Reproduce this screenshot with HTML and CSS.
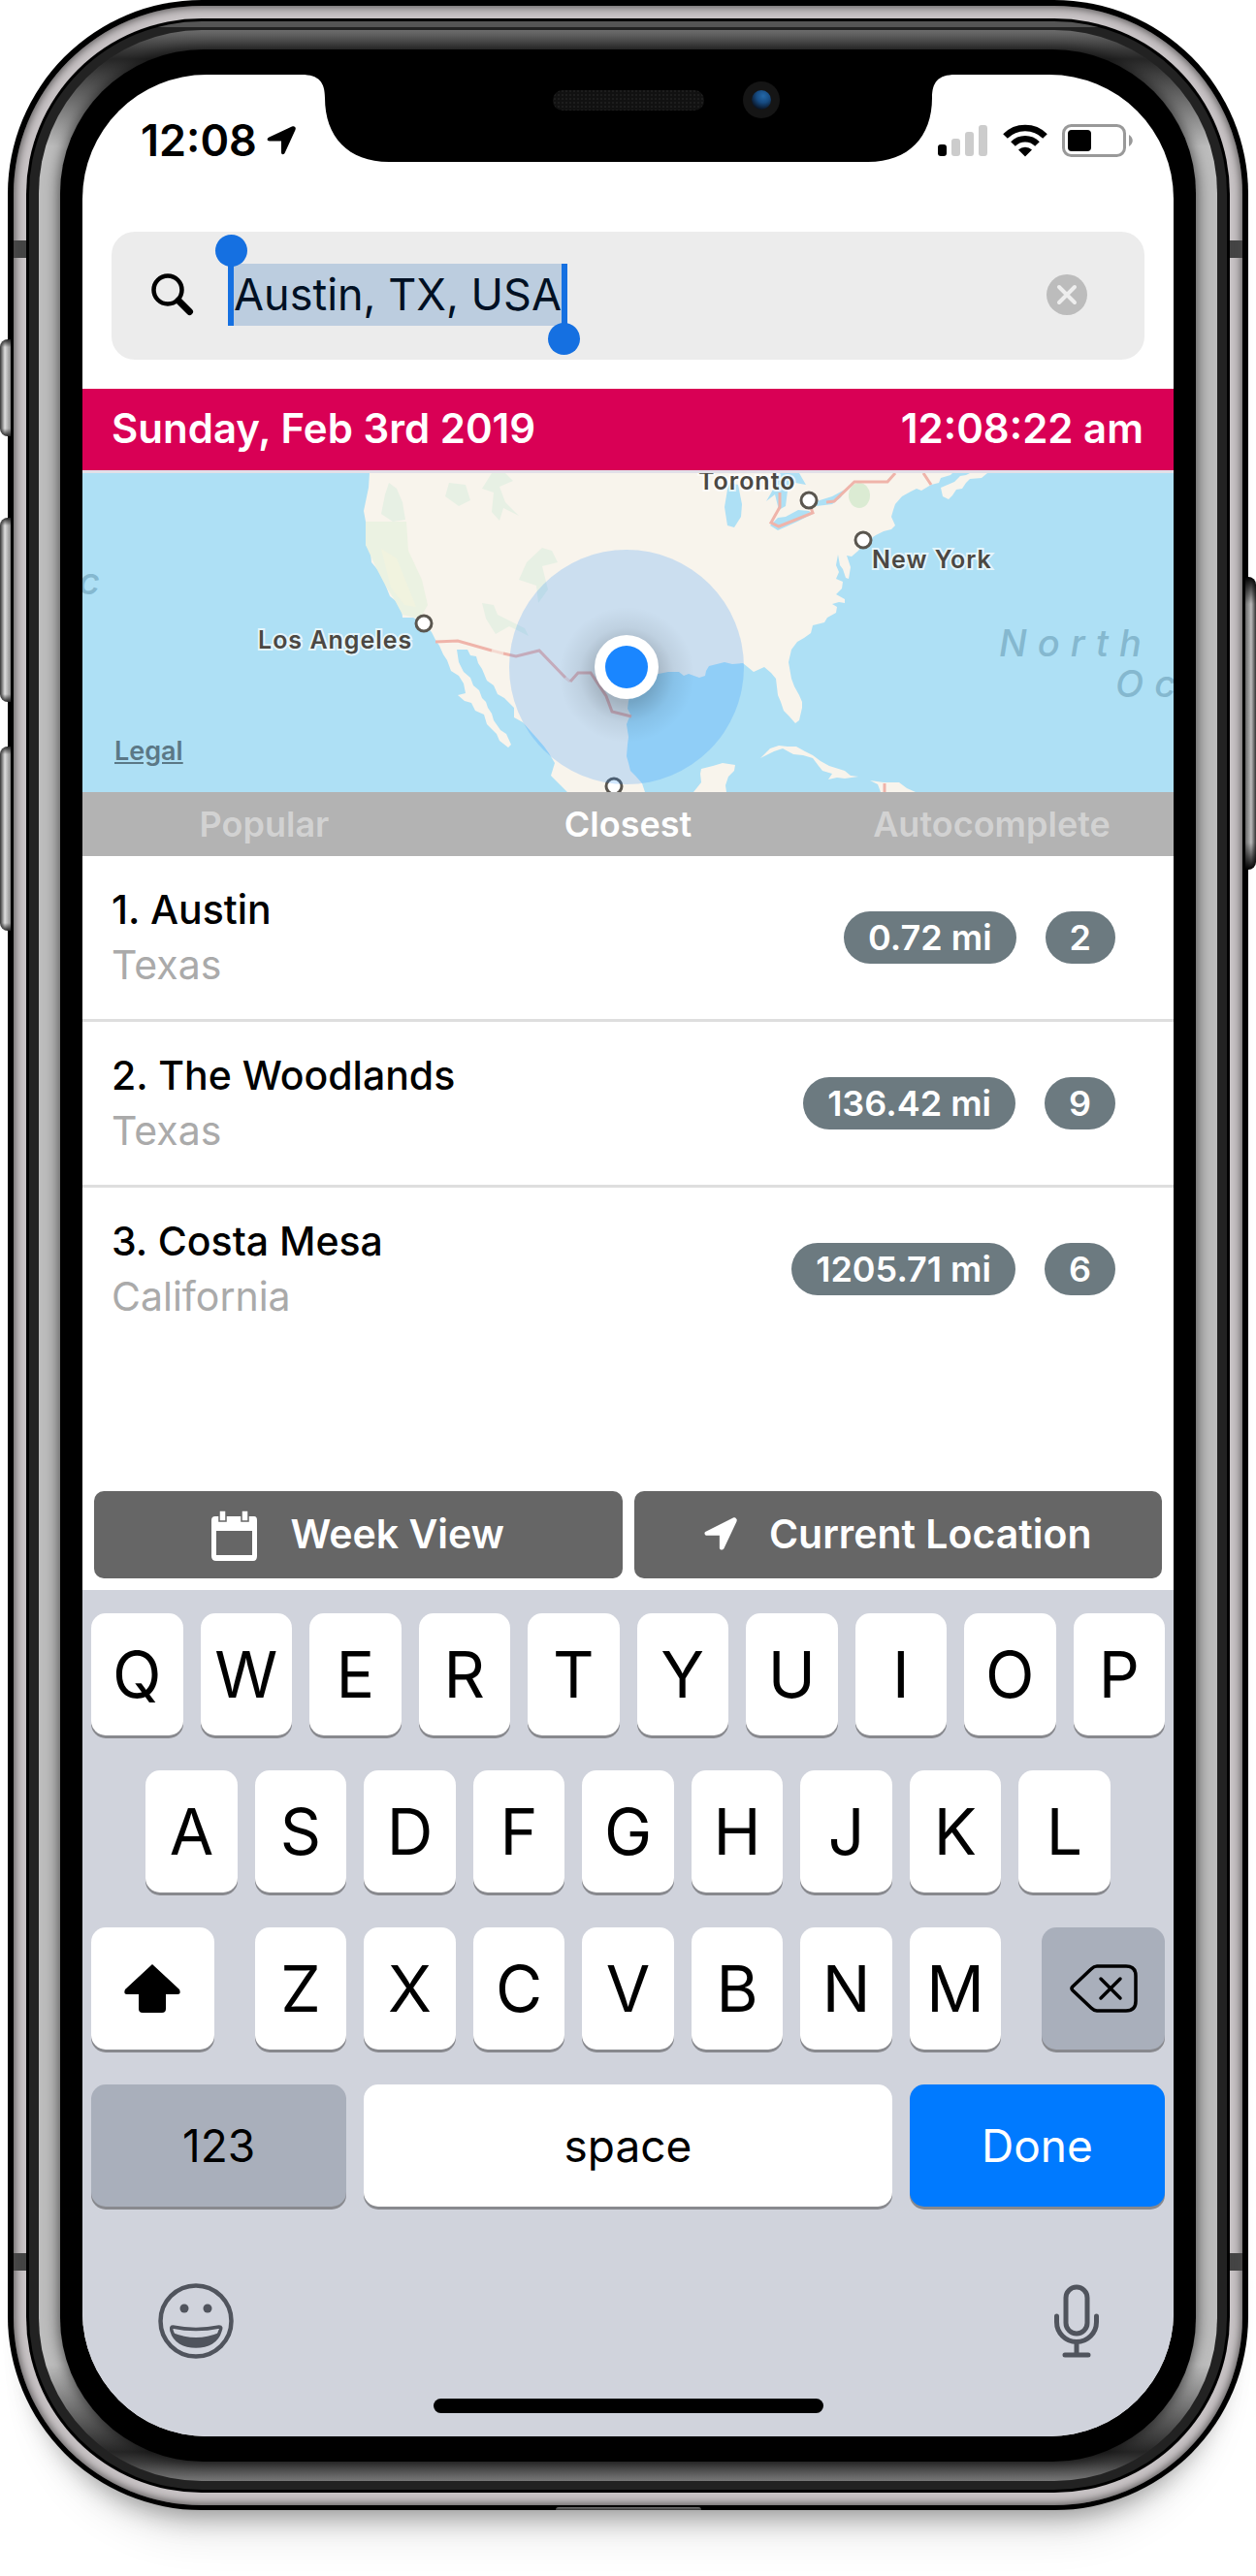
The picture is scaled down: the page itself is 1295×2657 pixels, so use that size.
FILE: index.html
```html
<!DOCTYPE html>
<html lang="en">
<head>
<meta charset="utf-8">
<meta name="viewport" content="width=device-width, initial-scale=1">
<title>Nearby cities</title>
<link rel="stylesheet" href="styles.css">
</head>
<body>
<div class="phone">
  <span class="side-button mute"></span>
  <span class="side-button volume-up"></span>
  <span class="side-button volume-down"></span>
  <span class="side-button power"></span>
  <div class="edge"><div class="band"><div class="gap"><div class="seam"><div class="bevel"><div class="glass">
  <div class="screen">
    <svg class="notch" viewBox="0 0 674 90" aria-hidden="true">
      <defs>
        <radialGradient id="lens" cx="0.6" cy="0.3" r="0.7"><stop offset="0" stop-color="#2468a8"/><stop offset="0.5" stop-color="#164a80"/><stop offset="1" stop-color="#0a1424"/></radialGradient>
        <pattern id="mesh" width="4" height="4" patternUnits="userSpaceOnUse"><rect width="4" height="4" fill="#111"/><rect width="2" height="2" fill="#1d1d1d"/></pattern>
      </defs>
      <path d="M0 0C18 0 24 8 24 24C24 64 48 90 90 90H584C626 90 650 64 650 24C650 8 656 0 674 0Z"/>
      <rect x="259" y="16" width="156" height="21" rx="10" fill="url(#mesh)"/>
      <circle cx="474" cy="26" r="19" fill="#151515"/>
      <circle cx="474" cy="26" r="10" fill="url(#lens)"/>
    </svg>

    <header class="status">
      <div class="status-left">
        <span class="time">12:08</span>
        <svg width="30" height="30" viewBox="0 0 30 30" aria-hidden="true"><path d="M29 1C30 2 30 2 29.500 4L19 27C18 30 15 30 15 27V15.500H3C0 15.500 0 12.500 2.500 11.500L26 .6C27.500 0 28.500 0 29 1Z"/></svg>
      </div>
      <div class="status-right">
        <svg width="52" height="34" viewBox="0 0 52 34" aria-hidden="true"><rect y="21" width="9" height="12" rx="3"/><g fill="#ccc"><rect x="14" y="15" width="9" height="18" rx="3"/><rect x="28" y="8" width="9" height="25" rx="3"/><rect x="42" y="1" width="9" height="32" rx="3"/></g></svg>
        <svg width="46" height="34" viewBox="0 0 46 34" aria-hidden="true"><g fill="none" stroke="#000" stroke-width="6.500"><path d="M2.500 12.500A29 29 0 0 1 43.500 12.500"/><path d="M10.500 20.500A17.500 17.500 0 0 1 35.500 20.500"/></g><path d="M23 33.500L16 26.500A10 10 0 0 1 30 26.500Z"/></svg>
        <svg width="74" height="34" viewBox="0 0 74 34" aria-hidden="true"><rect x="1.500" y="1.500" width="63" height="31" rx="8" fill="none" stroke="#999" stroke-width="3"/><rect x="6" y="6" width="24" height="22" rx="4"/><path d="M69 11C74 14 74 20 69 23Z" fill="#999"/></svg>
      </div>
    </header>

    <form class="search">
      <svg width="44" height="44" viewBox="0 0 44 44" aria-hidden="true"><circle cx="17" cy="17" r="14.500" fill="none" stroke="#000" stroke-width="4.500"/><path d="M28 28L39.500 39.500" stroke="#000" stroke-width="7" stroke-linecap="round"/></svg>
      <span class="selection"><input type="text" aria-label="City" value="Austin, TX, USA"></span>
      <button type="button" class="clear" aria-label="Clear"><svg width="42" height="42" viewBox="0 0 42 42" aria-hidden="true"><circle cx="21" cy="21" r="21" fill="#bcbcbc"/><path d="M13 13L29 29M29 13L13 29" stroke="#eee" stroke-width="4" stroke-linecap="round"/></svg></button>
    </form>

    <div class="datebar"><span>Sunday, Feb 3rd 2019</span><span>12:08:22 am</span></div>

    <div class="map">
      <svg class="map-art" viewBox="0 0 1125 329" preserveAspectRatio="xMidYMid slice" role="img" aria-label="Map of North America">
        <defs><radialGradient id="dotshade"><stop offset="0.4" stop-color="#000" stop-opacity=".2"/><stop offset="0.7" stop-color="#000" stop-opacity=".06"/><stop offset="1" stop-color="#000" stop-opacity="0"/></radialGradient></defs>
        <g fill="#f8f4ec">
          <path d="M296 0L295 15 290 39 292 50 293 62 292 74 297 82 298 92 303 98 310 105 313 117 317 127 322 131 329 137 330 149 341 149 352 155 360 164 364 172 368 178 372 187 376 193 380 204 388 209 393 217 395 227 387 229 394 235 401 237 405 245 414 249 417 259 427 269 430 276 439 283 442 280 437 269 431 265 424 255 422 248 418 242 416 236 412 232 409 224 403 219 400 211 393 205 388 195 386 182 397 182 400 188 406 189 408 196 412 202 417 214 424 219 428 228 435 232 445 242 445 252 454 257 462 266 470 275 476 282 481 289 487 299 483 312 493 322 500 329H580L577 320 570 312 565 307 563 299 561 292 562 280 563 272 561 259 565 249 562 243 563 235 568 222 580 212 594 207 604 205 615 205 620 209 625 207 636 211 642 209 643 204 646 199 654 197 662 195 670 197 681 196 692 205 703 200 710 206 715 212 717 229 720 236 723 245 728 250 735 258 739 255 742 242 742 236 739 229 734 220 731 212 728 195 731 182 737 174 744 170 751 165 753 157 765 154 768 149 777 144 778 138 773 135 780 133 786 134 786 130 777 125 783 119 784 112 777 109 780 102 777 95 779 84 781 95 784 99 787 108 790 109 792 97 788 85 793 86 800 80 806 72 818 64 826 60 834 58 838 54 834 45 836 38 838 32 845 24 854 19 860 16 865 18 875 12 883 10 885 5 895 2 897 0Z"/>
          <path d="M885 15L899 9 905 3 911 2 915 0H933L927 5 915 6 911 10 907 16 901 17 897 23 893 27 887 24Z"/>
          <path d="M699 294L709 284 718 281 727 282 736 282 745 287 753 291 761 297 770 302 786 307 792 312 800 313 786 315 778 314 769 316 773 310 763 307 759 302 753 294 743 291 733 290 722 284 713 287Z"/>
          <path d="M812 317L826 319 842 319 850 325 859 329H823L820 321Z"/>
          <path d="M630 329L638 319 637 310 638 305 650 302 660 299 673 301 672 307 666 313 663 322 664 329Z"/>
        </g>
        <g fill="#e7f0e4">
          <path d="M316 10L324 16 330 30 333 48 320 50 308 42 312 22Z"/>
          <path d="M378 10L395 12 400 28 388 34 374 24Z"/>
          <path d="M422 0H436L444 8 430 14 436 30 450 44 434 36 430 49 422 40 424 20 412 16Z"/>
          <path d="M474 77L484 80 490 92 474 96 480 120 470 134 468 116 450 110 458 92Z"/>
          <path d="M412 134L424 136 428 146 456 160 460 168 440 158 426 166 416 150Z"/>
        </g>
        <path d="M292 50H334L336 80 350 110 356 136 348 150 330 146 322 131 313 117 303 98 292 74Z" fill="#ebf2e2"/>
        <path d="M308 78L324 88 336 118 344 138 332 136 318 118Z" fill="#f1f3df"/>
        <ellipse cx="801" cy="23" rx="11" ry="13" fill="#dbebd3"/>
        <g fill="#aee0f5">
          <path d="M667 10L676 12 680 32 679 45 672 56 665 54 662 35 665 17Z"/>
          <path d="M705 29L712 17 717 2 720 0H739L746 12 735 10 727 18 725 34 718 38 714 22Z"/>
          <path d="M709 54L717 46 725 45 738 38 749 39 753 42 745 46 737 50 726 55 717 59Z"/>
          <path d="M752 33L757 29 773 24 786 17 782 25 773 32 757 34Z"/>
        </g>
        <g fill="none" stroke="#efb4aa" stroke-width="3">
          <path d="M364 174L387 173 422 183"/>
          <path d="M422 183L434 186M498 211L503 215" stroke-opacity=".4"/>
          <path d="M434 186L447 189 471 183 498 211M503 215L511 206H524L540 230 546 246 566 251"/>
          <path d="M719 20V35L710 51 718 55 753 41 750 33M767 30L775 29 796 9H830L838 0M867 0L875 12M827 320V329"/>
        </g>
        <g fill="#fff" stroke="#5a564f" stroke-width="3"><circle cx="352" cy="155" r="8"/><circle cx="749" cy="28" r="8"/><circle cx="805" cy="69" r="8"/><circle cx="548" cy="323" r="8"/></g>
        <circle cx="561" cy="200" r="121" fill="#1a86ff" fill-opacity=".2"/>
        <circle cx="561" cy="208" r="70" fill="url(#dotshade)"/>
        <circle cx="561" cy="200" r="33" fill="#fff"/>
        <circle cx="561" cy="200" r="22" fill="#1a86ff"/>
        <g class="city"><text x="181" y="181">Los Angeles</text><text x="635" y="17">Toronto</text><text x="814" y="98">New York</text></g>
        <g class="ocean"><text x="-4" y="125">c</text><text x="945" y="189">North</text><text x="1065" y="231">Oc</text></g>
      </svg>
      <a class="legal" href="#legal">Legal</a>
    </div>

    <nav class="tabs">
      <button type="button">Popular</button>
      <button type="button" class="active">Closest</button>
      <button type="button">Autocomplete</button>
    </nav>

    <ul class="results">
      <li><div><p class="name">1. Austin</p><p class="region">Texas</p></div><span class="badge">0.72 mi</span><span class="badge">2</span></li>
      <li><div><p class="name">2. The Woodlands</p><p class="region">Texas</p></div><span class="badge">136.42 mi</span><span class="badge">9</span></li>
      <li><div><p class="name">3. Costa Mesa</p><p class="region">California</p></div><span class="badge">1205.71 mi</span><span class="badge">6</span></li>
    </ul>

    <div class="actions">
      <button type="button"><svg width="48" height="60" viewBox="0 0 48 60" aria-hidden="true"><path fill="#fff" fill-rule="evenodd" d="M4 12H44Q47 12 47 16V53Q47 58 43 58H5Q0 58 0 53V16Q0 12 4 12ZM5 27V52H42V27Z"/><g fill="#fff" stroke="#666" stroke-width="1.500"><rect x="8" y="6" width="7" height="11"/><rect x="31" y="6" width="7" height="11"/></g></svg>Week View</button>
      <button type="button"><svg width="34" height="34" viewBox="0 0 30 30" aria-hidden="true"><path fill="#fff" d="M29 1C30 2 30 2 29.500 4L18 28.500C17 30 14 30 14 28V16.500H2C0 16 0 13.500 1.500 13L26 .6C27.500 0 28.500 0 29 1Z"/></svg>Current Location</button>
    </div>

    <div class="keyboard">
      <div class="keys">
        <button type="button">Q</button><button type="button">W</button><button type="button">E</button><button type="button">R</button><button type="button">T</button><button type="button">Y</button><button type="button">U</button><button type="button">I</button><button type="button">O</button><button type="button">P</button>
        <button type="button" class="row-start">A</button><button type="button">S</button><button type="button">D</button><button type="button">F</button><button type="button">G</button><button type="button">H</button><button type="button">J</button><button type="button">K</button><button type="button">L</button>
        <button type="button" class="shift" aria-label="Shift"><svg width="58" height="50" viewBox="0 0 58 50" aria-hidden="true"><path d="M29 0L57 26Q59 31 55 31H43V46Q43 50 39 50H19Q15 50 15 46V31H3Q-1 31 1 26Z"/></svg></button><button type="button">Z</button><button type="button">X</button><button type="button">C</button><button type="button">V</button><button type="button">B</button><button type="button">N</button><button type="button">M</button><button type="button" class="delete" aria-label="Delete"><svg width="70" height="50" viewBox="0 0 70 50" aria-hidden="true"><g fill="none" stroke="#000" stroke-width="3.500" stroke-linejoin="round" stroke-linecap="round"><path d="M28 2H58Q68 2 68 12V38Q68 48 58 48H28Q25 48 22 45L3 27Q1 25 3 23L22 5Q25 2 28 2Z"/><path d="M32 15L52 35M52 15L32 35"/></g></svg></button>
        <button type="button" class="mode">123</button><button type="button" class="space">space</button><button type="button" class="done">Done</button>
      </div>
      <div class="extras">
        <button type="button" aria-label="Emoji"><svg width="78" height="78" viewBox="0 0 78 78" aria-hidden="true"><g fill="none" stroke="#50545d" stroke-width="4.500"><circle cx="39" cy="39" r="36.500"/><path d="M15 45Q39 50 63 45Q66 45 64 49C61 60 51 65 39 65C27 65 17 60 14 49Q13 45 15 45Z" stroke-width="3.500"/></g><g fill="#50545d"><circle cx="27" cy="26" r="4.500"/><circle cx="51" cy="26" r="4.500"/><path d="M15 51Q39 61 63 51C59 62 51 66 39 66C27 66 19 62 15 51Z"/></g></svg></button>
        <button type="button" aria-label="Dictate"><svg width="46" height="76" viewBox="0 0 46 76" aria-hidden="true"><g fill="none" stroke="#50545d" stroke-width="5" stroke-linecap="round"><rect x="12" y="3" width="22" height="48" rx="11"/><path d="M2.500 33V39A20.500 20.500 0 0 0 43.500 39V33M23 60V72M11 73H35"/></g></svg></button>
      </div>
      <div class="home"></div>
    </div>
  </div>
  </div></div></div></div></div></div>
  <span class="port"></span>
</div>
</body>
</html>
```
FILE: styles.css
```css
* { box-sizing: border-box; }

body {
  margin: 0;
  padding: 0 8px 68px;
  background: #fff;
  color: #000;
  font-family: Inter, "Liberation Sans", sans-serif;
  overflow-x: hidden;
}

p, ul { margin: 0; padding: 0; }
svg { display: block; flex: none; }
button { border: 0; padding: 0; background: none; color: inherit; font: inherit; }

/* Phone body: nested rings from the outer edge to the glass */
.phone { position: relative; }
.edge {
  position: relative;
  padding: 6px 6px 5px;
  border-radius: 200px;
  background: #000;
  box-shadow: 0 32px 28px -26px rgba(0, 0, 0, .4), 0 60px 40px -30px rgba(0, 0, 0, .08);
}
.band {
  padding: 13px;
  border-radius: 194px;
  background: linear-gradient(transparent 242px, #444 242px 260px, transparent 260px calc(100% - 260px), #444 calc(100% - 260px) calc(100% - 242px), transparent calc(100% - 242px)), #c8c3c5;
  box-shadow: inset 0 0 10px 1px #4c4a4a;
}
.gap { padding: 3px; border-radius: 181px; background: #000; }
.seam {
  padding: 9px 10px;
  border-radius: 178px;
  background: linear-gradient(#555 6px, #222 6px calc(100% - 9px), #222);
}
.bevel {
  padding: 20px 22px;
  border-radius: 168px;
  background: linear-gradient(#6c6c6c, #3a3a3a 20px, #262626 30px, #bdbdbd 120px calc(100% - 120px), #262626 calc(100% - 30px), #3a3a3a calc(100% - 20px), #777);
}
.glass {
  padding: 26px 23px;
  border-radius: 148px;
  background: #000;
  box-shadow: 0 0 16px rgba(0, 0, 0, .7);
}

.side-button {
  position: absolute;
  left: -8px;
  z-index: 1;
  width: 11px;
  border-radius: 8px 0 0 8px;
  background: linear-gradient(#222, transparent 8px calc(100% - 8px), #222), linear-gradient(to right, #333, #ddd 5px, #888);
}
.mute { top: 350px; height: 100px; }
.volume-up { top: 534px; height: 190px; }
.volume-down { top: 770px; height: 190px; }
.power {
  top: 595px;
  right: -8px;
  left: auto;
  height: 302px;
  border-radius: 0 8px 8px 0;
  background: linear-gradient(#000, transparent 28px calc(100% - 28px), #000), linear-gradient(to left, #333, #bbb 5px, #666);
}
.port {
  position: absolute;
  bottom: 0;
  left: 50%;
  width: 150px;
  height: 3px;
  margin-left: -75px;
  border-radius: 12px 12px 0 0;
  background: linear-gradient(#777, #333);
}

.screen {
  position: relative;
  overflow: hidden;
  border-radius: 128px;
  background: #fff;
}
.notch {
  position: absolute;
  top: 0;
  left: 50%;
  width: 674px;
  margin-left: -337px;
}

/* Status bar */
.status {
  display: flex;
  justify-content: space-between;
  align-items: center;
  padding: 41px 41px 0 60px;
  line-height: 54px;
}
.status-left { display: flex; align-items: center; gap: 10px; }
.status-right { display: flex; align-items: center; gap: 15px; }
.time { font-size: 45px; font-weight: 600; }

/* Search field */
.search {
  display: flex;
  align-items: center;
  height: 132px;
  margin: 67px 30px 30px;
  padding: 0 59px 2px 41px;
  border-radius: 24px;
  background: #ececec;
}
.selection {
  position: relative;
  display: flex;
  margin-left: 35px;
  border: solid #1570e1;
  border-width: 0 6px;
  background: #bccddf;
}
.selection::before, .selection::after {
  content: "";
  position: absolute;
  width: 33px;
  height: 33px;
  border-radius: 50%;
  background: #1570e1;
}
.selection::before { top: -30px; left: -19px; }
.selection::after { right: -19px; bottom: -30px; }
.search input {
  field-sizing: content;
  height: 64px;
  padding: 0;
  border: 0;
  background: none;
  color: #001023;
  font: 400 45px/64px Inter, "Liberation Sans", sans-serif;
  outline: 0;
}
.clear { margin-left: auto; }

.datebar {
  display: flex;
  justify-content: space-between;
  height: 84px;
  padding: 0 31px 0 30px;
  background: #d90055;
  color: #fff;
  font-size: 42px;
  font-weight: 600;
  line-height: 82px;
}

/* Map */
.map { position: relative; border-top: 3px solid #e2e0e8; background: #aee0f5; }
.map-art { width: 100%; height: 329px; }
.city {
  fill: #4b4843;
  stroke: #fff;
  stroke-width: 4px;
  stroke-opacity: .7;
  paint-order: stroke;
  font-size: 25px;
  font-weight: 600;
  letter-spacing: 1px;
}
.ocean { fill: #85b8cf; font-size: 38px; font-style: italic; font-weight: 500; letter-spacing: 11px; }
.legal {
  position: absolute;
  bottom: 26px;
  left: 33px;
  color: #5b7886;
  font-size: 27px;
  font-weight: 600;
  line-height: 32px;
}

.tabs { display: grid; grid-template-columns: repeat(3, 1fr); height: 66px; background: #b3b3b3; }
.tabs button { color: #d2d2d2; font-size: 36px; font-weight: 600; }
.tabs .active { color: #fff; }

/* Results */
.results { padding-bottom: 145px; list-style: none; }
.results li {
  display: flex;
  align-items: center;
  gap: 30px;
  padding: 27px 60px 27px 30px;
}
.results li + li { border-top: 3px solid #dedede; }
.results div { flex: 1; }
.name, .region { font-size: 41px; line-height: 57px; }
.name { font-weight: 500; }
.region { color: #aaa; }
.badge {
  padding: 0 25px;
  border-radius: 27px;
  background: #6c7a80;
  color: #fff;
  font-size: 36px;
  font-weight: 600;
  line-height: 54px;
}

.actions { display: grid; grid-template-columns: 1fr 1fr; gap: 12px; padding: 0 12px 12px; }
.actions button {
  display: flex;
  justify-content: center;
  align-items: center;
  gap: 33px;
  height: 90px;
  padding-bottom: 3px;
  border-radius: 10px;
  background: #666;
  color: #fff;
  font-size: 41px;
  font-weight: 600;
}

/* Keyboard */
.keyboard { padding: 24px 9px; background: #d0d3dc; }
.keys { display: grid; grid-template-columns: repeat(20, 1fr); grid-auto-rows: 126px; gap: 36px 18px; }
.keys button {
  display: flex;
  justify-content: center;
  align-items: center;
  grid-column-end: span 2;
  border-radius: 15px;
  background: #fff;
  box-shadow: 0 3px #88898e;
  font-size: 66px;
}
.keys .row-start { grid-column: 2 / span 2; }
.keys .shift { grid-column: 1 / span 3; margin-right: 24px; }
.keys .delete { grid-column: 18 / span 3; margin-left: 24px; background: #a9afbb; }
.keys .mode, .keys .space, .keys .done { font-size: 46px; }
.keys .mode { grid-column: 1 / span 5; background: #a9afbb; }
.keys .space { grid-column: 6 / span 10; }
.keys .done { grid-column: 16 / span 5; background: #007aff; color: #fff; }
.extras {
  display: flex;
  justify-content: space-between;
  align-items: center;
  padding: 79px 68px 41px 69px;
}
.home { width: 402px; height: 15px; margin: 0 auto; border-radius: 8px; background: #000; }
```
